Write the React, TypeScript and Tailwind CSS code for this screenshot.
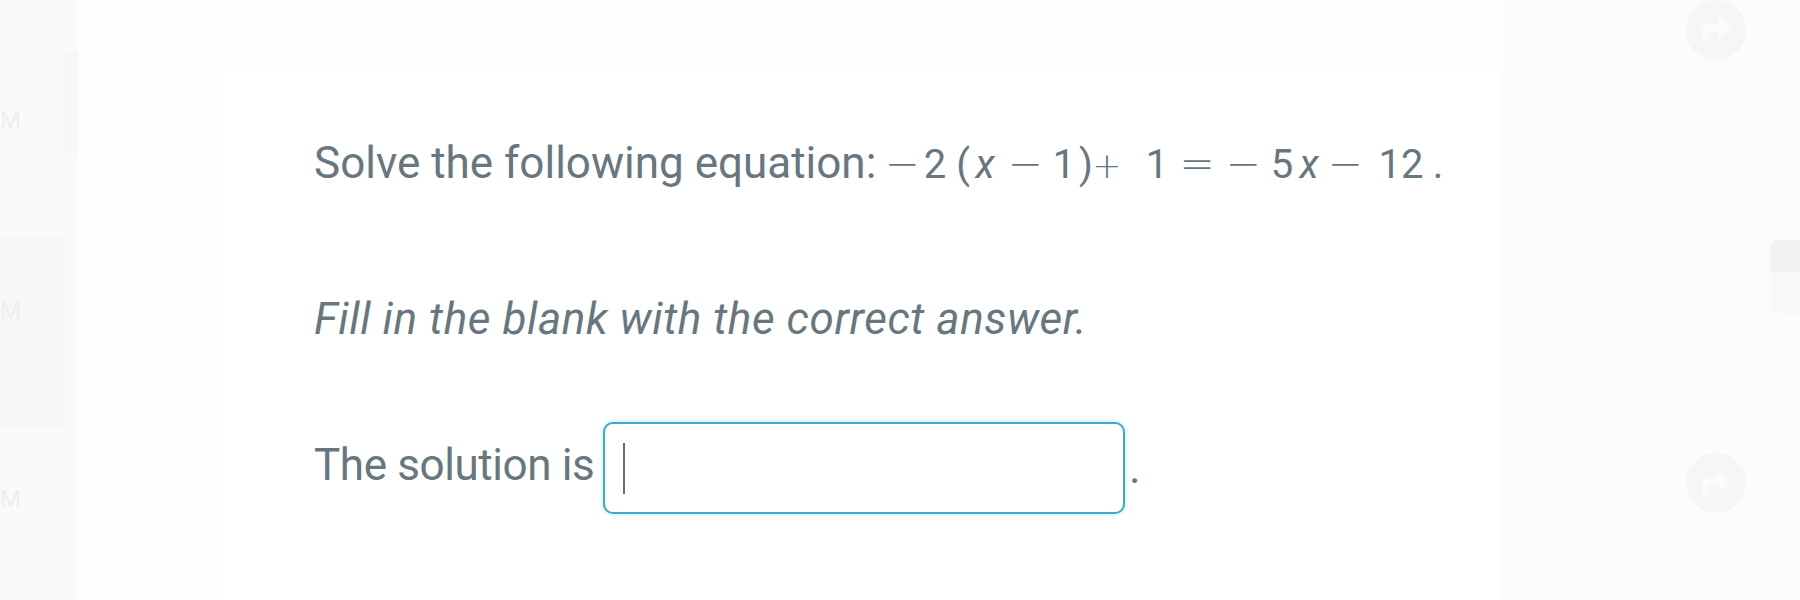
import { FaShare } from "react-icons/fa";

// Equation tokens: each cell is as wide as the distance to the next glyph's centre
const mathTokens: { text: string; cell: string; kind?: "var" | "op" | "plus" }[] = [
  { text: "\u2212", cell: "w-[33px]", kind: "op" },
  { text: "2", cell: "w-[28px]" },
  { text: "(", cell: "w-[22px]" },
  { text: "x", cell: "w-[40px]", kind: "var" },
  { text: "\u2212", cell: "w-[39px]", kind: "op" },
  { text: "1", cell: "w-[22px]" },
  { text: ")", cell: "w-[21px]" },
  { text: "+", cell: "w-[50px]", kind: "plus" },
  { text: "1", cell: "w-[40px]" },
  { text: "=", cell: "w-[46px]", kind: "op" },
  { text: "\u2212", cell: "w-[39px]", kind: "op" },
  { text: "5", cell: "w-[27px]" },
  { text: "x", cell: "w-[36px]", kind: "var" },
  { text: "\u2212", cell: "w-[56px]", kind: "op" },
  { text: "12", cell: "w-[37px]" },
  { text: ".", cell: "w-0" },
];

const glyphClass = {
  var: "italic",
  op: "font-['DejaVu_Sans',sans-serif] font-extralight text-[42px]",
  plus: "font-['DejaVu_Sans',sans-serif] font-extralight text-[35px]",
};

function Equation() {
  return (
    <span className="flex items-baseline text-[40px]">
      {mathTokens.map((t, i) => (
        <span key={i} className={`flex ${t.cell}`}>
          <span className={`flex w-0 justify-center ${t.kind ? glyphClass[t.kind] : ""}`}>{t.text}</span>
        </span>
      ))}
    </span>
  );
}

function LeftRail() {
  return (
    <div className="flex w-[78px] shrink-0 bg-[#fafafa] text-[24px] leading-none text-[#eeeeee]">
      <div className="flex w-[63px] flex-col">
        <div className="h-[237px] pt-[108px]">
          <span className="block">M</span>
        </div>
        <div className="h-[190px] bg-[#f7f7f7] pt-[62px]">
          <span className="block">M</span>
        </div>
        <div className="pt-[60px]">
          <span className="block">M</span>
        </div>
      </div>
      <div className="w-[15px] pt-[52px]">
        <div className="h-[101px] bg-[#f6f6f6]" />
      </div>
    </div>
  );
}

function FloatButton() {
  return (
    <div className="flex h-[60px] w-[60px] items-center justify-center rounded-full bg-[#f6f6f6] text-[#fbfbfb]">
      <FaShare size={30} />
    </div>
  );
}

export default function App() {
  return (
    <div className="flex h-[600px] w-full overflow-hidden bg-[#fcfcfc] font-['Roboto',sans-serif] text-[#67767f]">
      <LeftRail />

      <div className="w-[1424px] shrink-0 bg-[#fdfdfd] pl-[140px] pt-[67px]">
        <div className="h-full bg-white pl-[96px] pt-[70px] text-[44px] leading-[52px]">
          <div className="flex items-baseline">
            <span className="w-[588px] shrink-0">Solve the following equation:</span>
            <Equation />
          </div>

          <p className="mt-[101px] italic tracking-[0.6px]">Fill in the blank with the correct answer.</p>

          <div className="mt-[77px] flex items-center">
            <span className="w-[289px] shrink-0 pb-[7px] tracking-[-0.4px]">The solution is</span>
            <div className="flex h-[92px] w-[522px] shrink-0 items-center rounded-[10px] border-2 border-[#42a8c8] bg-white pl-[18px] shadow-[0_0_4px_rgba(90,220,245,0.6)]">
              <span className="h-[51px] w-[2px] bg-[#6b6b6b]" />
            </div>
            <span className="ml-[4px]">.</span>
          </div>
        </div>
      </div>

      <div className="flex flex-1">
        <div className="flex w-[264px] shrink-0 flex-col pl-[184px]">
          <FloatButton />
          <div className="mt-[393px]">
            <FloatButton />
          </div>
        </div>
        <div className="flex-1 bg-[#fbfbfb] pl-[4px] pt-[240px]">
          <div className="flex h-[74px] flex-col overflow-hidden rounded-l-[10px] bg-[#f8f8f8]">
            <div className="h-[32px] bg-[#f2f2f2]" />
          </div>
        </div>
      </div>
    </div>
  );
}
